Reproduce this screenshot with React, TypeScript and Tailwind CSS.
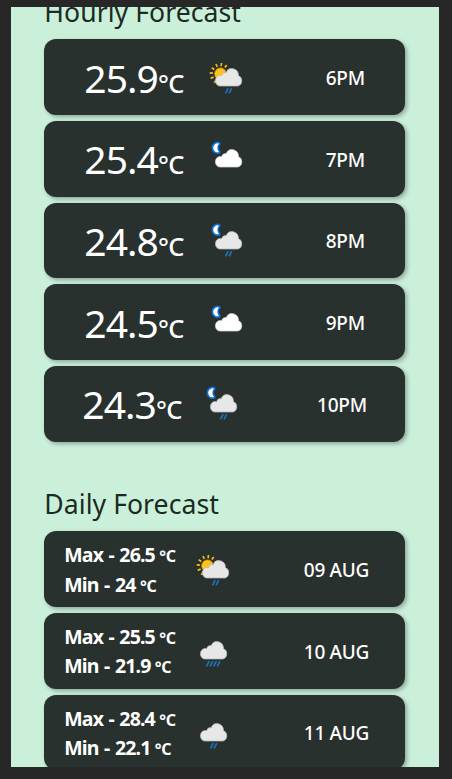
import React from 'react';

type Sky = 'sun' | 'moon' | 'none';

interface WeatherIconProps {
  sky: Sky;
  drops: number;
  white?: boolean;
}

function WeatherIcon({ sky, drops, white }: WeatherIconProps) {
  const start = 19.3 - drops * 2;
  return (
    <svg viewBox="0 0 36 36" className="mt-[7px] h-9 w-9 shrink-0 overflow-visible">
      {sky === 'sun' && (
        <g>
          <g stroke="#f5bd18" strokeWidth="1.7" strokeLinecap="butt">
            {[0, 30, 60, 90, 120, 150, 180, 210, 240, 270, 300, 330].map((a) => (
              <path key={a} d="M10.5 3.2v-3.2" transform={`rotate(${a + 5} 10.5 10.8)`} />
            ))}
          </g>
          <circle cx="10.5" cy="10.8" r="5.8" fill="#fbc21a" stroke="#f09c12" strokeWidth="0.8" />
        </g>
      )}
      {sky === 'moon' && (
        <path
          d="M9 -0.5a4.5 4.5 0 1 0 0 8.6a6.5 6.5 0 0 1 0-8.6z"
          fill="#fff"
          stroke="#0b6fd6"
          strokeWidth="3.4"
          strokeLinejoin="round"
          paintOrder="stroke"
        />
      )}
      <path
        d="M10.3 24.4a4.7 4.7 0 0 1-.4-9.4q1-.1 1.8.2a4 4 0 0 1 4.4-2.7a6.6 6.6 0 0 1 12.5 2.7a4.8 4.8 0 0 1-.5 9.2z"
        transform="translate(0 -4.3) scale(1 1.12)"
        fill={white ? '#ffffff' : '#e7e7e8'}
        stroke={white ? '#cfd2d2' : '#b5b9b9'}
        strokeWidth="0.7"
      />
      <g stroke="#1b72bd" strokeWidth="1.7">
        {Array.from({ length: drops }, (_, i) => (
          <path key={i} d={`M${start + 2.8 + i * 3.6} 25.2l-2.6 5.2`} />
        ))}
      </g>
    </svg>
  );
}

interface Hour {
  temp: string;
  time: string;
  sky: Sky;
  drops: number;
  tempCell: string;
  timeCell: string;
}

const hours: Hour[] = [
  { temp: '25.9', time: '6PM', sky: 'sun', drops: 2, tempCell: 'pl-[40px] w-[166px]', timeCell: 'mr-[40px]' },
  { temp: '25.4', time: '7PM', sky: 'moon', drops: 0, tempCell: 'pl-[40px] w-[166px]', timeCell: 'mr-[40px]' },
  { temp: '24.8', time: '8PM', sky: 'moon', drops: 2, tempCell: 'pl-[40px] w-[166px]', timeCell: 'mr-[40px]' },
  { temp: '24.5', time: '9PM', sky: 'moon', drops: 0, tempCell: 'pl-[40px] w-[166px]', timeCell: 'mr-[40px]' },
  { temp: '24.3', time: '10PM', sky: 'moon', drops: 2, tempCell: 'pl-[38px] w-[160.5px]', timeCell: 'mr-[38px]' },
];

interface Day {
  max: string;
  min: string;
  date: string;
  sky: Sky;
  drops: number;
  tempCell: string;
}

const days: Day[] = [
  { max: '26.5', min: '24', date: '09 AUG', sky: 'sun', drops: 2, tempCell: 'w-[153px]' },
  { max: '25.5', min: '21.9', date: '10 AUG', sky: 'none', drops: 4, tempCell: 'w-[150.5px]' },
  { max: '28.4', min: '22.1', date: '11 AUG', sky: 'none', drops: 2, tempCell: 'w-[150.5px]' },
];

const card =
  'flex h-[75.7px] shrink-0 items-center rounded-[12px] bg-[#29312e] text-white shadow-[2px_2px_4px_rgba(0,0,0,0.3)]';

function Reading({ label, value }: { label: string; value: string }) {
  return (
    <p className="h-[29.3px] whitespace-nowrap text-[19.5px] leading-[29.3px] font-bold tracking-[-0.85px] [word-spacing:1.2px]">
      {label} - {value} <span className="-ml-px text-[16px] tracking-[-0.3px]">°C</span>
    </p>
  );
}

export default function App() {
  return (
    <div className="h-[779px] w-[452px] bg-[#282727] pt-[7px] pr-[13px] pb-[12px] pl-[11px] font-['Noto_Sans','Open_Sans',sans-serif]">
      <main className="h-[760px] overflow-hidden bg-[#caf0da] pr-[34px] pl-[33.3px]">
        <section>
          <h2 className="-mt-[15px] h-[47.3px] text-[26.6px] leading-[40px] tracking-[0.05px] text-[#1c2a24]">Hourly Forecast</h2>
          <div className="flex flex-col gap-[6px]">
            {hours.map((h) => (
              <article key={h.time} className={card}>
                <div className={`${h.tempCell} shrink-0 whitespace-nowrap pt-[6px] text-[39px] leading-[60px] tracking-[-0.95px]`}>
                  {h.temp}
                  <span className="text-[25.5px] font-medium tracking-[-0.6px]">°C</span>
                </div>
                <WeatherIcon sky={h.sky} drops={h.drops} white={h.drops === 0} />
                <time className={`${h.timeCell} mt-[2px] ml-auto text-[19px] font-medium tracking-[-0.2px]`}>{h.time}</time>
              </article>
            ))}
          </div>
        </section>
        <section className="pt-[42px]">
          <h2 className="h-[47.6px] text-[26.6px] leading-[40px] tracking-[0.05px] text-[#1c2a24]">Daily Forecast</h2>
          <div className="flex flex-col gap-[6px]">
            {days.map((d) => (
              <article key={d.date} className={card}>
                <div className={`${d.tempCell} shrink-0 pt-[1px] pl-[20px]`}>
                  <Reading label="Max" value={d.max} />
                  <Reading label="Min" value={d.min} />
                </div>
                <WeatherIcon sky={d.sky} drops={d.drops} />
                <time className="mt-[2px] mr-[36px] ml-auto text-[19px] font-medium tracking-[-0.3px]">{d.date}</time>
              </article>
            ))}
          </div>
        </section>
      </main>
    </div>
  );
}
